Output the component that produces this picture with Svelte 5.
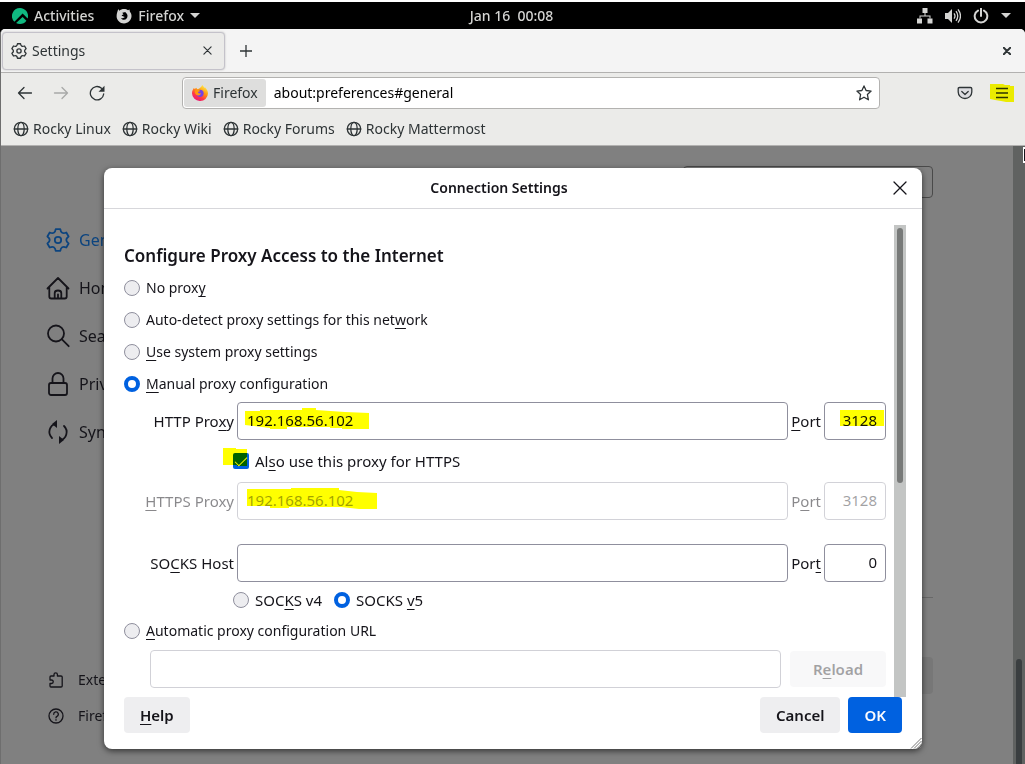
<script lang="ts">
    const bookmarks = ['Rocky Linux', 'Rocky Wiki', 'Rocky Forums', 'Rocky Mattermost'];

    const categories = [
        { id: 'general', label: 'General' },
        { id: 'home', label: 'Home' },
        { id: 'search', label: 'Search' },
        { id: 'privacy', label: 'Privacy & Security' },
        { id: 'sync', label: 'Sync' }
    ];

    let mode = $state('manual');
    let socksVersion = $state('5');
    let httpProxy = $state('192.168.56.102');
    let httpPort = $state('3128');
    let shareProxy = $state(true);
    let socksHost = $state('');
    let socksPort = $state('0');
    let autoUrl = $state('');
    let address = $state('about:preferences#general');
</script>

{#snippet gear()}
    <svg viewBox="0 0 24 24" class="line gear">
        <path d="M9.700 1.100h4.600Q15 6.800 20.300 4.500l2.300 4Q18 12 22.600 15.500l-2.300 4Q15 17.200 14.300 22.900H9.700Q9 17.200 3.700 19.500l-2.300-4Q6 12 1.400 8.500l2.300-4Q9 6.800 9.700 1.100z" />
        <circle cx="12" cy="12" r="3.200" />
    </svg>
{/snippet}

{#snippet globe()}
    <svg viewBox="0 0 16 16" class="line globe">
        <circle cx="8" cy="8" r="6.700" />
        <ellipse cx="8" cy="8" rx="3.200" ry="6.700" />
        <path d="M1.300 8h13.400" />
    </svg>
{/snippet}

<div class="desktop">
    <header class="topbar">
        <div class="side">
            <button class="top-item">
                <svg viewBox="0 0 16 16" class="rocky">
                    <path fill="#10b981" d="M15.600 10.600A8 8 0 0 0 8 0a8 8 0 0 0-5.600 13.700l8.200-8.200 2.100 2.100z" />
                    <path fill="#10b981" d="M14.400 12.700l-3.800-3.800-6.500 6.100A8 8 0 0 0 8 16a8 8 0 0 0 6.400-3.300z" />
                </svg>
                Activities
            </button>
            <button class="top-item">
                <svg viewBox="0 0 16 16" class="fox">
                    <path d="M2.300 1l1 1.700C4.400 1.600 6.300 1 8 1c1.600 0 3 .5 4 1.200l1.500-.7.400 2.300C15 5 15.600 6.500 15.500 8.300 15.300 12.300 12 15.400 8 15.400S.600 12.200.600 8.200C.600 5.700 1.500 3.300 2.300 1z" />
                    <path d="M6.300 4.700l3.200-.700c-.4.700 1.700 1.200 2 3.600.2 2.500-1.400 4.200-3.500 4.200-1.600 0-2.600-.8-3-1.800 1.500.6 3 .2 3.700-.900l-2.900-1.300c-.3-.7.400-1.200 1.700-1.300z" fill="#000" />
                </svg>
                Firefox
                <svg viewBox="0 0 10 5" class="caret"><path d="M0 0h10L5 5z" /></svg>
            </button>
        </div>
        <span class="clock">Jan 16&nbsp; 00:08</span>
        <div class="side tray">
            <svg viewBox="0 0 16 16" class="sys">
                <path d="M5.500 0h5v5h-5zM0 10.500h5v5H0zM10.500 10.500h5v5h-5z" />
                <path d="M7.500 5h1v2.500h5v3h-1v-2h-9v2h-1v-3h5z" />
            </svg>
            <svg viewBox="0 0 16 16" class="sys">
                <path d="M0 5h3l4-4v14l-4-4H0z" />
                <path d="M9 5.300q2 2.700 0 5.400M11 3.200q3.500 4.800 0 9.600M13 1.300q5 6.700 0 13.400" class="wave" />
            </svg>
            <svg viewBox="0 0 16 16" class="sys">
                <path d="M5 2.600a6.300 6.300 0 1 0 6 0M8 0v8" class="ring" />
            </svg>
            <svg viewBox="0 0 10 5" class="caret"><path d="M0 0h10L5 5z" /></svg>
        </div>
    </header>

    <div class="window">
        <div class="tabs">
            <div class="tab">
                {@render gear()}
                <span>Settings</span>
                <button class="plain" aria-label="Close tab">
                    <svg viewBox="0 0 10 10" class="line x"><path d="M1 1l8 8M9 1l-8 8" /></svg>
                </button>
            </div>
            <button class="plain add" aria-label="New tab">
                <svg viewBox="0 0 12 12" class="line"><path d="M6 0v12M0 6h12" /></svg>
            </button>
            <button class="plain close-window" aria-label="Close window">
                <svg viewBox="0 0 10 10" class="line heavy"><path d="M1 1l8 8M9 1l-8 8" /></svg>
            </button>
        </div>

        <div class="toolbar">
            <div class="nav">
                <button class="plain" aria-label="Back">
                    <svg viewBox="0 0 16 16" class="line"><path d="M14.500 8H1.500M7 2.500L1.500 8 7 13.500" /></svg>
                </button>
                <button class="plain" aria-label="Forward" disabled>
                    <svg viewBox="0 0 16 16" class="line"><path d="M1.500 8h13M9 2.500L14.500 8 9 13.500" /></svg>
                </button>
                <button class="plain" aria-label="Reload page">
                    <svg viewBox="0 0 16 16" class="line"><path d="M12.500 3.200A6.700 6.700 0 1 0 14.700 9" /><path d="M15.500.800v6H9.500z" class="solid" /></svg>
                </button>
            </div>
            <div class="urlbar">
                <span class="identity">
                    <svg viewBox="0 0 16 16" class="brand">
                        <defs>
                            <linearGradient id="flame" x1="0.800" y1="0" x2="0.200" y2="1">
                                <stop offset="0" stop-color="#fff44f" />
                                <stop offset="0.400" stop-color="#ff980e" />
                                <stop offset="0.700" stop-color="#ff3647" />
                                <stop offset="1" stop-color="#e31587" />
                            </linearGradient>
                        </defs>
                        <path fill="url(#flame)" d="M10.300 0c1 1.200 1.500 2 2.200 2.700.4.200.5-.2.500-.500C14.800 4 16 6 16 8.500A7.800 7.800 0 0 1 8 16 7.800 7.800 0 0 1 0 8.300C0 6 1 4.200 2 2.800l.4 1.300L4.600 2.800l.3 1.400c2 0 4.200-1.700 5.400-4.200z" />
                        <circle cx="8" cy="8.300" r="3.600" fill="#7542e5" />
                        <path fill="#ff980e" d="M2.800 5.400C5 4.400 7 4.700 8.300 6.200c-1.800 0-2.300.8-2.200 1.600.8.800 2.500.7 2.900.2-.2 2.300-2.800 3.100-4.800 1.700C3.200 8.800 2.600 7.200 2.800 5.400z" />
                    </svg>
                    Firefox
                </span>
                <input type="text" aria-label="Address" bind:value={address} />
                <button class="plain" aria-label="Bookmark this page">
                    <svg viewBox="0 0 16 16" class="line"><path d="M8 .9l2.100 4.600 5 .6-3.700 3.400 1 5.300L8 12.200l-4.400 2.600 1-5.300L.900 6.100l5-.6z" /></svg>
                </button>
            </div>
            <div class="tools">
                <button class="plain" aria-label="Save to Pocket">
                    <svg viewBox="0 0 16 16" class="line pocket"><path d="M2.500 2.500h11q1.300 0 1.300 1.300V7a6.800 6.500 0 0 1-13.600 0V3.800q0-1.300 1.300-1.300z" /><path d="M4.800 6.500L8 9.500l3.200-3" /></svg>
                </button>
                <button class="plain menu" aria-label="Open menu">
                    <svg viewBox="0 0 12 12" class="line"><path d="M0 1.500h12M0 6h12M0 10.500h12" /></svg>
                    <svg viewBox="0 0 24 20" class="marker"><path d="M0 1h13l2 1h5v1h4v16h-8l-5-1-6-1-5-1z" /></svg>
                </button>
            </div>
        </div>

        <nav class="bookmarks">
            {#each bookmarks as name}
                <a href="#{name}">{@render globe()}{name}</a>
            {/each}
        </nav>

        <div class="page">
            <aside>
                {#each categories as cat}
                    <a href="#{cat.id}" class:selected={cat.id === 'general'}>
                        {#if cat.id === 'general'}
                            {@render gear()}
                        {:else if cat.id === 'home'}
                            <svg viewBox="0 0 24 24" class="line"><path d="M1.500 12.500L12 2l10.500 10.500M3.300 11v9.500q0 2 2 2h13.400q2 0 2-2V11M8.700 22.500V17q0-2.500 3.300-2.500t3.300 2.500v5.500M12 18.500v4" /></svg>
                        {:else if cat.id === 'search'}
                            <svg viewBox="0 0 24 24" class="line"><circle cx="10" cy="9.500" r="8" /><path d="M15.700 15.200l7 7" /></svg>
                        {:else if cat.id === 'privacy'}
                            <svg viewBox="0 0 24 24" class="line"><rect x="3" y="11" width="18" height="12" rx="2" /><path d="M6.500 11V6.500a5.500 5.500 0 0 1 11 0V11" /></svg>
                        {:else}
                            <svg viewBox="0 0 24 24" class="line"><path d="M10 3.600A8.500 8.500 0 0 0 6 18M14 20.400A8.500 8.500 0 0 0 18 6" /><path d="M11 0v8L6 4zM13 16v8l5-4z" class="solid" /></svg>
                        {/if}
                        {cat.label}
                    </a>
                {/each}
                <div class="secondary">
                    <a href="#addons">
                        <svg viewBox="0 0 16 16" class="line"><path d="M2 7V5q0-1 1-1h3V2.500a1.700 1.700 0 0 1 3.400 0V4H13q1.200 0 1.200 1v9q0 1-1.200 1H3q-1 0-1-1v-2.500h1.500a1.700 1.700 0 0 0 0-3.500H2z" /></svg>
                        Extensions &amp; Themes
                    </a>
                    <a href="#support">
                        <svg viewBox="0 0 16 16" class="line"><circle cx="8" cy="8" r="7" /><path d="M5.700 6.300a2.300 2.300 0 1 1 3.300 2q-1 .5-1 1.500M8 11.700v.5" /></svg>
                        Firefox Support
                    </a>
                </div>
            </aside>
            <div class="settings">
                <input type="search" aria-label="Find in Settings" />
                <hr />
                <button aria-label="Settings"></button>
            </div>
            <div class="page-scroll"><div></div></div>
            <svg viewBox="0 0 2 16" class="pointer"><path d="M0 0h2v16H0z" fill="#fff" /><path d="M1 2h1v12H1z" /></svg>

            <div class="overlay">
                <div class="dialog" role="dialog" aria-labelledby="dialog-title">
                    <div class="dialog-head">
                        <h1 id="dialog-title">Connection Settings</h1>
                        <button class="plain" aria-label="Close">
                            <svg viewBox="0 0 14 14" class="line"><path d="M1 1l12 12M13 1L1 13" /></svg>
                        </button>
                    </div>

                    <div class="dialog-body">
                        <form>
                            <h2>Configure Proxy Access to the Internet</h2>
                            <label class="choice"><input type="radio" value="none" bind:group={mode} /><span>No prox<u>y</u></span></label>
                            <label class="choice"><input type="radio" value="detect" bind:group={mode} /><span>Auto-detect proxy settings for this net<u>w</u>ork</span></label>
                            <label class="choice"><input type="radio" value="system" bind:group={mode} /><span><u>U</u>se system proxy settings</span></label>
                            <label class="choice"><input type="radio" value="manual" bind:group={mode} /><span><u>M</u>anual proxy configuration</span></label>

                            <div class="proxy">
                                <label for="http">HTTP Pro<u>x</u>y</label>
                                <div class="field">
                                    <input id="http" type="text" bind:value={httpProxy} />
                                    <svg viewBox="0 0 124 22" class="marker wide"><path d="M0 3h15V2h42V0h14v2l29 2 24 1v16H97v-1H85v-1H42v2H25v-1L0 17z" /></svg>
                                </div>
                                <label for="http-port"><u>P</u>ort</label>
                                <div class="field">
                                    <input id="http-port" class="port" type="text" bind:value={httpPort} />
                                    <svg viewBox="0 0 44 16" class="marker small"><path d="M0 0h44v16H0z" /></svg>
                                </div>

                                <div class="under share">
                                    <label class="choice"><input type="checkbox" bind:checked={shareProxy} /><span>Al<u>s</u>o use this proxy for HTTPS</span></label>
                                    <svg viewBox="0 0 24 20" class="marker tick"><path d="M0 0h13v1h11v17H14v-1H0z" /></svg>
                                </div>

                                <label for="https" class="off"><u>H</u>TTPS Proxy</label>
                                <div class="field">
                                    <input id="https" type="text" value={httpProxy} disabled={shareProxy} />
                                    <svg viewBox="0 0 130 22" class="marker wider"><path d="M0 1h44V0h48v2l18 2 20 1v16h-18l-18-2H42v1H23v-2H0z" /></svg>
                                </div>
                                <label for="https-port" class="off">P<u>o</u>rt</label>
                                <div class="field"><input id="https-port" class="port" type="text" value={httpPort} disabled={shareProxy} /></div>

                                <div class="spacer"></div>

                                <label for="socks">SO<u>C</u>KS Host</label>
                                <div class="field"><input id="socks" type="text" bind:value={socksHost} /></div>
                                <label for="socks-port">Por<u>t</u></label>
                                <div class="field"><input id="socks-port" class="port" type="text" bind:value={socksPort} /></div>

                                <div class="under versions">
                                    <label class="choice"><input type="radio" value="4" bind:group={socksVersion} /><span>SOC<u>K</u>S v4</span></label>
                                    <label class="choice"><input type="radio" value="5" bind:group={socksVersion} /><span>SOCKS <u>v</u>5</span></label>
                                </div>
                            </div>

                            <label class="choice auto"><input type="radio" value="auto" bind:group={mode} /><span><u>A</u>utomatic proxy configuration URL</span></label>
                            <div class="auto-row">
                                <input type="text" aria-label="Automatic proxy configuration URL" bind:value={autoUrl} disabled={mode !== 'auto'} />
                                <button type="button" class="button reload" disabled>R<u>e</u>load</button>
                            </div>
                        </form>
                        <div class="dialog-scroll"><div></div></div>
                    </div>

                    <div class="dialog-foot">
                        <button class="button"><u>H</u>elp</button>
                        <button class="button cancel">Cancel</button>
                        <button class="button primary">OK</button>
                    </div>
                    <svg viewBox="0 0 12 12" class="grip"><path d="M1 11.500L11.500 1M4 11.500L11.500 4M7 11.500L11.500 7M9.500 11.500l2-2" /></svg>
                </div>
            </div>
        </div>
    </div>
</div>

<style>
    :global(body) {
        margin: 0;
        background: #000;
    }

    .desktop {
        display: flex;
        flex-direction: column;
        box-sizing: border-box;
        min-height: 100vh;
        border-top: 2px solid #fff;
        background: #000;
        color: #2e3436;
        font: 14px/20px 'Noto Sans', 'Open Sans', sans-serif;
    }

    .desktop *,
    .desktop *::before {
        box-sizing: border-box;
    }

    button,
    input {
        font: inherit;
        color: inherit;
    }

    a {
        color: inherit;
        text-decoration: none;
    }

    svg {
        display: block;
        flex: none;
        fill: currentColor;
    }

    .line {
        width: 16px;
        height: 16px;
        fill: none;
        stroke: currentColor;
        stroke-width: 1.3;
        stroke-linecap: round;
        stroke-linejoin: round;
    }

    .gear {
        stroke-width: 2;
    }

    .solid {
        fill: currentColor;
        stroke: none;
    }

    .plain {
        display: flex;
        align-items: center;
        justify-content: center;
        padding: 0;
        border: 0;
        background: none;
    }

    u {
        text-decoration-thickness: 1px;
        text-underline-offset: 3px;
        text-decoration-skip-ink: none;
    }

    .topbar {
        display: flex;
        align-items: center;
        height: 27px;
        padding: 0 14px 0 12px;
        color: #d4d4d2;
        font-weight: 500;
    }

    .side {
        display: flex;
        flex: 1;
        gap: 22px;
    }

    .tray {
        align-items: center;
        justify-content: flex-end;
        gap: 12px;
    }

    .top-item {
        display: flex;
        align-items: center;
        gap: 6px;
        padding: 0;
        border: 0;
        background: none;
    }

    .rocky,
    .fox,
    .sys {
        width: 16px;
        height: 16px;
    }

    .wave,
    .ring {
        fill: none;
        stroke: currentColor;
        stroke-width: 1.3;
    }

    .ring {
        stroke-width: 2;
        stroke-linecap: round;
    }

    .caret {
        width: 10px;
        height: 5px;
    }

    .window {
        display: flex;
        flex: 1;
        flex-direction: column;
        overflow: hidden;
        border-left: 1px solid #6e6e6e;
        border-radius: 5px 5px 0 0;
        background: #ebebe9;
    }

    .tabs {
        display: flex;
        align-items: center;
        height: 44px;
        padding: 0 14px 0 1px;
        border-bottom: 1px solid #b2b1b0;
        background: #f4f4f4;
    }

    .tab {
        display: flex;
        align-items: center;
        width: 223px;
        height: 38px;
        padding: 0 12px 0 8px;
        gap: 5px;
        border: 1px solid #c4c2ca;
        border-radius: 4px;
        background: #ebebe9;
        box-shadow: 0 0 2px #bbb;
    }

    .tab span {
        flex: 1;
    }

    .x {
        width: 9px;
        height: 9px;
    }

    .add {
        margin-left: 15px;
    }

    .add svg {
        width: 12px;
        height: 12px;
    }

    .close-window {
        margin-left: auto;
    }

    .heavy {
        width: 8px;
        height: 8px;
        stroke-width: 2.4;
    }

    .toolbar {
        display: flex;
        align-items: center;
        height: 40px;
        padding: 0 11px 0 16px;
    }

    .nav {
        display: flex;
        flex: 0 0 165px;
        gap: 20px;
    }

    .nav button:disabled {
        color: #a8a9a8;
    }

    .urlbar {
        display: flex;
        flex: 1;
        align-items: center;
        height: 32px;
        padding: 1px 7px 1px 1px;
        border: 1px solid #b3b2b0;
        border-radius: 4px;
        background: #fff;
    }

    .identity {
        display: flex;
        align-items: center;
        align-self: stretch;
        gap: 5px;
        padding: 0 8px;
        border-radius: 3px;
        background: #dededd;
    }

    .brand {
        width: 16px;
        height: 16px;
    }

    .urlbar input {
        flex: 1;
        min-width: 0;
        padding: 0 8px;
        border: 0;
        outline: 0;
        background: none;
        color: #000;
    }

    .tools {
        display: flex;
        flex: 0 0 134px;
        justify-content: flex-end;
        gap: 17px;
    }

    .pocket {
        fill: #dcdce0;
    }

    .menu {
        position: relative;
        width: 24px;
        height: 20px;
    }

    .menu .line {
        width: 12px;
        height: 12px;
    }

    .marker {
        position: absolute;
        fill: #ff0;
        mix-blend-mode: multiply;
        pointer-events: none;
    }

    .menu .marker {
        inset: 0;
        width: 24px;
        height: 20px;
    }

    .bookmarks {
        display: flex;
        align-items: center;
        gap: 11px;
        height: 33px;
        padding: 0 12px;
        border-bottom: 1px solid #b2b1b0;
    }

    .bookmarks a {
        display: flex;
        align-items: center;
        gap: 4px;
    }

    .page {
        position: relative;
        display: flex;
        flex: 1;
        background: #808080;
        color: #15141a;
    }

    aside {
        display: flex;
        flex: 0 0 300px;
        flex-direction: column;
        padding: 70px 0 30px 45px;
        font-size: 16px;
    }

    aside a {
        display: flex;
        align-items: center;
        gap: 9px;
        height: 48px;
    }

    aside > a .line {
        width: 24px;
        height: 24px;
        stroke-width: 1.8;
    }

    .selected {
        color: #0c447f;
    }

    .secondary {
        margin-top: auto;
        padding-left: 2px;
        font-size: 14px;
    }

    .secondary a {
        gap: 14px;
        height: 36px;
    }

    .settings {
        display: flex;
        flex: 1;
        flex-direction: column;
        align-items: flex-end;
        padding: 20px 80px 0 0;
    }

    .settings input {
        width: 250px;
        height: 32px;
        border: 1px solid #4a4a4a;
        border-radius: 4px;
        background: #808080;
    }

    .settings hr {
        width: 100%;
        margin: 399px 0 59px;
        border: 0;
        border-top: 1px solid #686868;
    }

    .settings button {
        width: 110px;
        height: 37px;
        border: 0;
        border-radius: 4px;
        background: #777;
    }

    .page-scroll {
        display: flex;
        align-items: flex-end;
        width: 12px;
        padding: 0 3px;
        background: #606261;
    }

    .page-scroll div {
        flex: 1;
        height: 105px;
        border-radius: 3px 3px 0 0;
        background: #3a3e40;
    }

    .pointer {
        position: absolute;
        top: 1px;
        right: 0;
        width: 2px;
        height: 16px;
    }

    .overlay {
        position: absolute;
        inset: 0;
        display: flex;
        align-items: flex-start;
        justify-content: center;
        padding-top: 22px;
    }

    .dialog {
        position: relative;
        width: 80%;
        max-width: 818px;
        border-radius: 8px;
        background: #fff;
        box-shadow: 0 2px 6px rgba(0, 0, 0, 0.6);
    }

    .dialog-head {
        display: flex;
        align-items: center;
        gap: 14px;
        height: 41px;
        padding: 0 15px;
        border-bottom: 1px solid #d7d7db;
    }

    h1,
    h2 {
        margin: 0;
        font-weight: 600;
    }

    h1 {
        flex: 1;
        font-size: 14px;
        text-align: center;
    }

    .dialog-head .line {
        width: 14px;
        height: 14px;
    }

    .dialog-body {
        display: flex;
        gap: 8px;
        padding: 16px 16px 0 20px;
    }

    form {
        flex: 1;
        min-width: 0;
        padding: 19px 0 9px;
    }

    h2 {
        height: 28px;
        font-size: 17px;
        line-height: 24px;
    }

    .choice {
        display: flex;
        align-items: center;
        gap: 6px;
        height: 32px;
    }

    input[type='radio'],
    input[type='checkbox'] {
        flex: none;
        width: 16px;
        height: 16px;
        margin: 0;
        border: 1px solid #8f8f9d;
        border-radius: 50%;
        appearance: none;
        background: #ededf0;
    }

    input[type='radio']:checked {
        border: 4px solid #0061e0;
        background: #fff;
    }

    input[type='checkbox'] {
        border-radius: 2px;
    }

    input[type='checkbox']:checked {
        display: flex;
        align-items: center;
        justify-content: center;
        border: 0;
        background: #0061e0;
    }

    input[type='checkbox']:checked::before {
        width: 12px;
        height: 6px;
        margin-bottom: 2px;
        border: solid #fff;
        border-width: 0 0 1px 1px;
        content: '';
        transform: rotate(-45deg);
    }

    .proxy {
        display: grid;
        grid-template-columns: 90px 1fr 30px 62px;
        align-items: center;
        column-gap: 3px;
        margin: 2px 0 0 20px;
        font-size: 15px;
    }

    .proxy > label {
        text-align: right;
        white-space: nowrap;
    }

    .off {
        opacity: 0.5;
    }

    .field {
        position: relative;
    }

    .field input,
    .auto-row input {
        display: block;
        width: 100%;
        height: 38px;
        padding: 0 9px 2px;
        border: 1px solid #8f8f9d;
        border-radius: 4px;
        outline: 0;
        background: #fff;
    }

    .field .port {
        padding: 0 8px 2px;
        text-align: right;
    }

    .field input:disabled,
    .auto-row input:disabled {
        opacity: 0.4;
    }

    .wide {
        top: 6px;
        left: 8px;
        width: 124px;
        height: 22px;
    }

    .wider {
        top: 6px;
        left: 10px;
        width: 130px;
        height: 22px;
    }

    .small {
        top: 8px;
        left: 16px;
        width: 44px;
        height: 16px;
    }

    .under {
        position: relative;
        display: flex;
        grid-column: 1 / -1;
        align-items: center;
        gap: 12px;
        padding-left: 89px;
    }

    .share {
        height: 42px;
    }

    .tick {
        top: 8px;
        left: 79px;
        width: 24px;
        height: 20px;
    }

    .spacer {
        grid-column: 1 / -1;
        height: 24px;
    }

    .versions {
        height: 36px;
    }

    .auto {
        height: 26px;
    }

    .auto-row {
        display: flex;
        align-items: center;
        gap: 9px;
        padding: 6px 0 0 26px;
    }

    .auto-row input {
        flex: 1;
    }

    .button {
        height: 36px;
        padding: 0 16px;
        border: 0;
        border-radius: 4px;
        background: #eeeef0;
        font-size: 15px;
        font-weight: 600;
    }

    .reload {
        width: 96px;
        opacity: 0.4;
    }

    .dialog-scroll {
        width: 12px;
        padding: 3px;
        background: #c3c5c4;
    }

    .dialog-scroll div {
        height: 255px;
        border-radius: 3px;
        background: #777978;
    }

    .dialog-foot {
        display: flex;
        gap: 8px;
        padding: 0 20px 16px;
    }

    .cancel {
        margin-left: auto;
    }

    .primary {
        background: #0061e0;
        color: #fbfbfe;
    }

    .grip {
        position: absolute;
        right: 0;
        bottom: 0;
        width: 12px;
        height: 12px;
        stroke: #777;
        stroke-width: 1;
    }
</style>
